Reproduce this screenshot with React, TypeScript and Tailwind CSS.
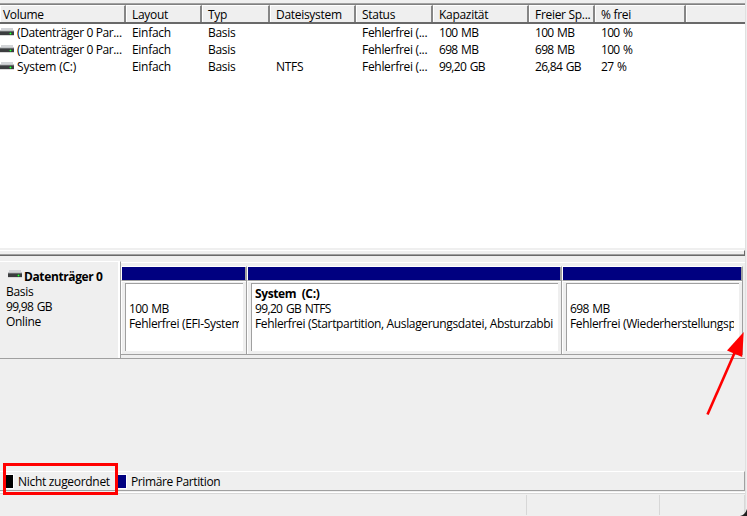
import clsx from 'clsx';

const columns = [
    { name: 'Volume', width: 'w-[126px]', numeric: false },
    { name: 'Layout', width: 'w-[76px]', numeric: false },
    { name: 'Typ', width: 'w-[68px]', numeric: false },
    { name: 'Dateisystem', width: 'w-[86px]', numeric: false },
    { name: 'Status', width: 'w-[77px]', numeric: false },
    { name: 'Kapazität', width: 'w-[96px]', numeric: true },
    { name: 'Freier Sp...', width: 'w-[66px]', numeric: true },
    { name: '% frei', width: 'w-[91px]', numeric: true },
];

const volumes = [
    ['(Datenträger 0 Par...', 'Einfach', 'Basis', '', 'Fehlerfrei (...', '100 MB', '100 MB', '100 %'],
    ['(Datenträger 0 Par...', 'Einfach', 'Basis', '', 'Fehlerfrei (...', '698 MB', '698 MB', '100 %'],
    ['System (C:)', 'Einfach', 'Basis', 'NTFS', 'Fehlerfrei (...', '99,20 GB', '26,84 GB', '27 %'],
];

const partitions = [
    { title: '', size: '100 MB', status: 'Fehlerfrei (EFI-Systempartition)', width: 'w-[126px]', clip: 'w-[110px]' },
    { title: 'System  (C:)', size: '99,20 GB NTFS', status: 'Fehlerfrei (Startpartition, Auslagerungsdatei, Absturzabbild)', width: 'w-[315px]', clip: 'w-[298px]' },
    { title: '', size: '698 MB', status: 'Fehlerfrei (Wiederherstellungspartition)', width: 'w-[181px]', clip: 'w-[164px]' },
];

function DriveIcon() {
    return (
        <svg className="block h-[8px] w-[14px] shrink-0" viewBox="0 0 14 8" shapeRendering="crispEdges">
            <path d="M1 0h12v3H1z" fill="#d3d5d8" />
            <path d="M0 2h14v1H0z" fill="#c3c5c8" />
            <path d="M0 3h14v4H0z" fill="#3b3d3f" />
            <path d="M0 3h14v1H0z" fill="#66696b" />
            <path d="M0 7h14v1H0z" fill="#d8d8d8" />
            <path d="M9 5h3v1h-3z" fill="#1c9a28" />
            <path d="M10 4h1v3h-1z" fill="#1c9a28" />
            <path d="M10 5h1v1h-1z" fill="#30ff40" />
        </svg>
    );
}

function VolumeTable() {
    return (
        <div className="h-[245px] w-[745px] border-t border-[#a0a0a0] bg-white">
            {/* Column headers */}
            <div className="flex h-5 border-t border-b-2 border-t-[#808080] border-b-[#696969] bg-[#efefef]">
                {columns.map((column, i) => (
                    <div
                        key={column.name}
                        className={clsx('flex shrink-0 items-center border-t border-r-2 border-t-white border-r-[#868686]', column.width)}
                    >
                        <div className={clsx('flex h-full w-full items-center border-l border-white', i === 0 ? 'pl-[2px]' : 'pl-[5px]')}>
                            {column.name}
                        </div>
                    </div>
                ))}
                <div className="flex-1 border-t border-l border-white"></div>
            </div>

            {volumes.map((row, index) => (
                <div key={index} className="flex h-[17px] items-center">
                    {row.map((value, i) => (
                        <div
                            key={i}
                            className={clsx(
                                'flex shrink-0',
                                columns[i].width,
                                i === 0 ? 'gap-[3px]' : 'pl-[6px]',
                                columns[i].numeric && 'tracking-[-0.7px] [word-spacing:1.2px]',
                                i === 0 && index < 2 && 'tracking-[-0.38px]',
                                i === 0 && index === 2 && 'tracking-[-0.2px]',
                            )}
                        >
                            {i === 0 && <div className="pt-[4px]"><DriveIcon /></div>}
                            {value}
                        </div>
                    ))}
                </div>
            ))}
        </div>
    );
}

function DiskRow() {
    return (
        <div className="flex h-[98px] w-[745px]">
            {/* Disk label */}
            <div className="flex h-[98px] w-[121px] shrink-0 flex-col border-t border-r border-b border-t-white border-r-[#a0a0a0] border-b-[#a0a0a0]">
                <div className="h-full border-r-2 border-white pt-[7px] pl-[6px] leading-[15px]">
                    <div className="flex gap-[2px] pl-[2px] font-bold tracking-[-0.38px]">
                        <div className="pt-px"><DriveIcon /></div>
                        Datenträger 0
                    </div>
                    <div>Basis</div>
                    <div className="tracking-[-0.7px] [word-spacing:1.2px]">99,98 GB</div>
                    <div>Online</div>
                </div>
            </div>

            {/* Partitions */}
            <div className="mt-px flex h-[97px] flex-1 border-t border-t-white border-b border-b-[#a0a0a0] pt-[3px]">
                {partitions.map((partition) => (
                    <div
                        key={partition.size}
                        className={clsx('h-[89px] shrink-0 border-t border-r border-b border-t-white border-r-[#a0a0a0] border-b-[#a0a0a0]', partition.width)}
                    >
                        <div className="h-3.5 border-r border-b border-l border-[#a0a0a0] border-l-white bg-[#000080]"></div>
                        <div className="h-[73px] border-t border-l border-white px-[3px] pt-[1px]">
                            <div className="h-[68px] border-t border-l border-[#a0a0a0] bg-white pt-[2px] pl-[3px] leading-[15px]">
                                <div className={clsx('overflow-hidden whitespace-pre', partition.clip)}>
                                    <div className="h-[15px] font-bold tracking-[-0.38px]">{partition.title}</div>
                                    <div className="tracking-[-0.65px] [word-spacing:1.2px]">{partition.size}</div>
                                    <div className="tracking-[-0.35px]">{partition.status}</div>
                                </div>
                            </div>
                        </div>
                    </div>
                ))}
            </div>
        </div>
    );
}

function Legend() {
    return (
        <div className="flex h-5 w-[745px] items-center border-t border-r border-b border-t-white border-r-[#a0a0a0] border-b-[#a0a0a0] pl-1">
            <div className="h-[15px] w-[10px] border border-white bg-black"></div>
            <div className="w-[103px] pl-1">Nicht zugeordnet</div>
            <div className="h-[15px] w-[10px] border border-white bg-[#000080]"></div>
            <div className="pl-1 tracking-[-0.38px]">Primäre Partition</div>
        </div>
    );
}

export default function App() {
    return (
        <div className="relative h-[516px] w-[747px] overflow-hidden bg-[#efefef] font-['Open_Sans',sans-serif] text-[12px] leading-[17px] tracking-[-0.3px] whitespace-nowrap text-black">
            <div className="h-[516px] w-[746px] border-r border-[#e0e0e0] pt-[3px]">
                <VolumeTable />

                {/* Splitter */}
                <div className="mt-[2px] h-[6px] w-[745px] border-t border-r border-b-2 border-t-white border-r-[#696969] border-b-[#696969]">
                    <div className="h-[4px] border-b border-[#a0a0a0]"></div>
                </div>

                <div className="h-[215px] pt-[5px]">
                    <DiskRow />
                </div>

                <Legend />

                {/* Status bar */}
                <div className="mt-px h-[24px] w-[745px] border-t border-white">
                    <div className="flex h-[23px] border-t border-[#d7d7d7] pt-px">
                        <div className="h-5 w-[527px] border-r border-[#d7d7d7]"></div>
                        <div className="h-5 w-[133px] border-r border-[#d7d7d7]"></div>
                        <div className="h-5 w-[85px] border-r border-[#d7d7d7]"></div>
                    </div>
                </div>
            </div>

            {/* Highlight around the legend entry */}
            <div className="absolute top-[463px] left-[3px] h-[32px] w-[115px] border-3 border-[#ff0000]"></div>

            {/* Arrow to the end of the last partition */}
            <svg className="absolute top-[325px] left-[700px] h-[95px] w-[47px]" viewBox="0 0 47 95">
                <path d="M7.5 89.5L34.5 28" stroke="#ff0000" strokeWidth="2.6" fill="none" />
                <path d="M43.7 7L27 25.5L42.2 32z" fill="#ff0000" />
            </svg>

            {/* Rounded window corner */}
            <svg className="absolute right-0 bottom-0 h-[7px] w-[7px]" viewBox="0 0 7 7">
                <path d="M7 0V7H0Q5 6 7 0z" fill="#202020" />
            </svg>
        </div>
    );
}
